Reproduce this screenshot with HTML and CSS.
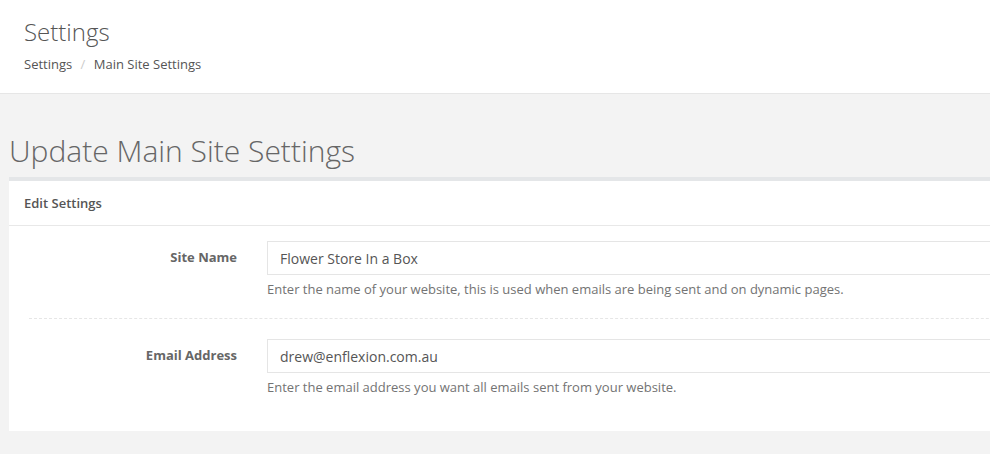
FILE: index.html
```html
<!DOCTYPE html>
<html lang="en">
<head>
    <meta charset="UTF-8">
    <title>Settings</title>
    <link rel="stylesheet" href="styles.css">
</head>
<body>
    <div class="page-header">
        <h1>Settings</h1>
        <div class="breadcrumb">
            <a href="#">Settings</a>
            <span class="sep">/</span>
            <span class="current">Main Site Settings</span>
        </div>
    </div>

    <div class="content">
        <h2 class="content-title">Update Main Site Settings</h2>

        <div class="panel">
            <div class="panel-heading">Edit Settings</div>
            <div class="panel-body">
                <div class="form-group">
                    <label for="siteName">Site Name</label>
                    <div class="field">
                        <input type="text" id="siteName" value="Flower Store In a Box">
                        <p class="help">Enter the name of your website, this is used when emails are being sent and on dynamic pages.</p>
                    </div>
                </div>
                <div class="form-group">
                    <label for="siteEmail">Email Address</label>
                    <div class="field">
                        <input type="text" id="siteEmail" value="drew@enflexion.com.au">
                        <p class="help">Enter the email address you want all emails sent from your website.</p>
                    </div>
                </div>
            </div>
        </div>
    </div>
</body>
</html>
```

FILE: styles.css
```css
* {
    margin: 0;
    padding: 0;
    box-sizing: border-box;
}

body {
    font-family: 'Open Sans', 'Liberation Sans', sans-serif;
    background: #f3f3f3;
    color: #555;
    overflow: hidden;
}

.page-header {
    background: white;
    border-bottom: 1px solid #e6e6e6;
    padding: 19px 24px 20px;
}

.page-header h1 {
    font-size: 24px;
    font-weight: 300;
    line-height: 26px;
    color: #555;
    margin-bottom: 10px;
}

.breadcrumb {
    font-size: 13px;
    line-height: 18px;
}

.breadcrumb a {
    color: #555;
    text-decoration: none;
}

.breadcrumb .sep {
    color: #ccc;
    padding: 0 5px;
}

.content {
    padding-left: 9px;
    overflow: hidden;
    padding-bottom: 40px;
}

.content-title {
    font-size: 30px;
    font-weight: 300;
    line-height: 36px;
    color: #666;
    margin-top: 39px;
    margin-bottom: 8px;
}

.panel {
    width: 1100px;
    background: white;
    border-top: 4px solid #e4e6e8;
}

.panel-heading {
    padding: 13px 15px;
    font-size: 13px;
    font-weight: 600;
    line-height: 18px;
    color: #555;
    border-bottom: 1px solid #e8e8e8;
}

.panel-body {
    padding: 15px 20px 35px;
}

.form-group {
    display: grid;
    grid-template-columns: 208px 1fr;
    gap: 30px;
}

.form-group + .form-group {
    margin-top: 20px;
    border-top: 1px dashed #e6e6e6;
    padding-top: 20px;
}

.form-group label {
    text-align: right;
    font-size: 13px;
    font-weight: 700;
    line-height: 20px;
    padding-top: 6px;
    color: #666;
}

.field input {
    display: block;
    width: 100%;
    height: 34px;
    padding: 6px 12px;
    border: 1px solid #e5e5e5;
    font-family: inherit;
    font-size: 14px;
    color: #555;
    background: white;
}

.help {
    margin-top: 5px;
    font-size: 13px;
    line-height: 18px;
    color: #737373;
}
```
